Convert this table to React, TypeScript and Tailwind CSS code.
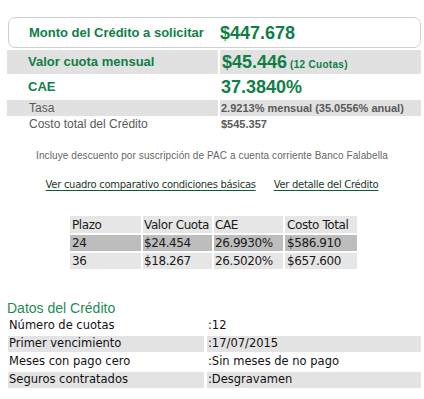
import React from "react";

const arial = { fontFamily: '"Liberation Sans", Arial, sans-serif' };
const tahoma = { fontFamily: '"DejaVu Sans", Tahoma, sans-serif' };

const comparativo = [
	{ plazo: "24", cuota: "$24.454", cae: "26.9930%", total: "$586.910", dark: true },
	{ plazo: "36", cuota: "$18.267", cae: "26.5020%", total: "$657.600", dark: false },
];

const datos = [
	["Número de cuotas", ":12"],
	["Primer vencimiento", ":17/07/2015"],
	["Meses con pago cero", ":Sin meses de no pago"],
	["Seguros contratados", ":Desgravamen"],
];

export default function App() {
	return (
		<div className="w-[424px] h-[399px] bg-white overflow-hidden" style={arial}>
			<div className="pt-[17px] pl-[7px] pr-[3px]">
				{/* monto */}
				<div className="ml-[1px] flex items-center h-[31px] rounded-[7px] border border-[#cfcfcf] text-[#0f7f46] font-bold whitespace-nowrap">
					<span className="w-[211px] pl-[20px] text-[13px]">Monto del Crédito a solicitar</span>
					<span className="text-[18px] leading-none">$447.678</span>
				</div>

				<div className="mt-[2px] flex h-[24px] gap-[2px] text-[#0f7f46] font-bold whitespace-nowrap">
					<div className="w-[211px] bg-[#e1e1e1] pl-[21px] text-[13px] flex items-center">Valor cuota mensual</div>
					<div className="flex-1 bg-[#e1e1e1] pl-[2px] flex items-center">
						<span className="text-[18px] leading-none">$45.446</span>
						<span className="ml-[3px] mt-[4px] text-[10px] tracking-[0.3px]">(12 Cuotas)</span>
					</div>
				</div>

				<div className="flex h-[26px] text-[#0f7f46] font-bold">
					<div className="w-[213px] pl-[21px] text-[13px] flex items-center">CAE</div>
					<div className="flex-1 pl-[1px] text-[18px] leading-none flex items-center">37.3840%</div>
				</div>

				<div className="flex h-[16px] gap-[2px] text-[#595959] whitespace-nowrap">
					<div className="w-[211px] bg-[#e1e1e1] pl-[22px] text-[12px] flex items-center">Tasa</div>
					<div className="flex-1 bg-[#e1e1e1] pl-[1px] text-[11px] font-bold flex items-center">2.9213% mensual (35.0556% anual)</div>
				</div>
				<div className="flex h-[16px] gap-[2px] text-[#595959] whitespace-nowrap">
					<div className="w-[211px] pl-[22px] text-[12px] flex items-center">Costo total del Crédito</div>
					<div className="flex-1 pl-[1px] text-[11px] font-bold flex items-center">$545.357</div>
				</div>
			</div>

			<p className="mt-[16px] text-center text-[10px] text-[#666] tracking-[0.1px]">
				Incluye descuento por suscripción de PAC a cuenta corriente Banco Falabella
			</p>

			<div className="mt-[14px] flex justify-center gap-[18px] text-[10px] tracking-[-0.3px] text-[#1b3a2a] whitespace-nowrap" style={tahoma}>
				<a className="underline decoration-[#0d5c34] underline-offset-2">Ver cuadro comparativo condiciones básicas</a>
				<a className="underline decoration-[#0d5c34] underline-offset-2">Ver detalle del Crédito</a>
			</div>

			<table className="mt-[22px] ml-[68px] border-separate border-spacing-[2px] text-[12px] tracking-[-0.4px] text-[#1a1a1a] whitespace-nowrap" style={tahoma}>
				<thead>
					<tr className="bg-[#e6e6e6] h-[17px]">
						<th className="w-[71px] text-left font-normal pl-[2px] py-0 leading-none">Plazo</th>
						<th className="w-[69px] text-left font-normal pl-[1px] py-0 leading-none">Valor Cuota</th>
						<th className="w-[69px] text-left font-normal pl-[1px] py-0 leading-none">CAE</th>
						<th className="w-[72px] text-left font-normal pl-[2px] py-0 leading-none">Costo Total</th>
					</tr>
				</thead>
				<tbody>
					{comparativo.map((r) => (
						<tr key={r.plazo} className={`h-[16px] ${r.dark ? "bg-[#bdbdbd]" : "bg-[#e6e6e6]"}`}>
							<td className="pl-[2px] py-0 leading-none">{r.plazo}</td>
							<td className="pl-[1px] py-0 leading-none">{r.cuota}</td>
							<td className="pl-[1px] py-0 leading-none">{r.cae}</td>
							<td className="pl-[2px] py-0 leading-none">{r.total}</td>
						</tr>
					))}
				</tbody>
			</table>

			<h3 className="mt-[29px] ml-[7px] text-[14px] leading-[16px] text-[#1f8a55]">Datos del Crédito</h3>
			<div className="ml-[8px] mr-[3px] mt-[2px] flex flex-col gap-[2px] text-[11.5px] text-[#111]" style={tahoma}>
				{datos.map(([k, v], i) => (
					<div key={k} className="flex h-[16px] gap-[3px]">
						<div className={`w-[196px] pl-[1px] flex items-center ${i % 2 ? "bg-[#e3e3e3]" : ""}`}>{k}</div>
						<div className={`flex-1 pl-[1px] flex items-center ${i % 2 ? "bg-[#e3e3e3]" : ""}`}>{v}</div>
					</div>
				))}
			</div>
		</div>
	);
}
